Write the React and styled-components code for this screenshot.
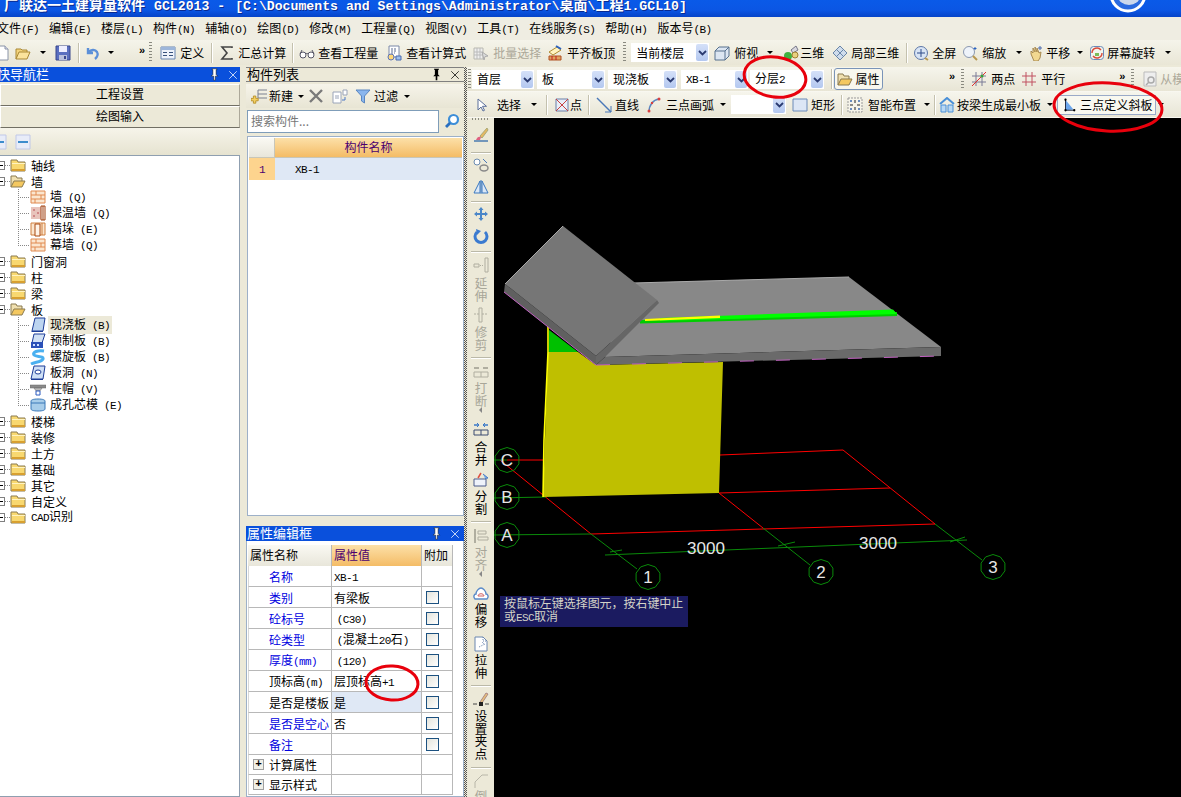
import React from 'react';
import styled, { createGlobalStyle } from 'styled-components';

const Global = createGlobalStyle`
  html, body { margin: 0; padding: 0; background: #ece9d8; overflow: hidden; }
  #root { width: 1181px; height: 797px; }
  * { box-sizing: border-box; }
`;
const CJK = `"Noto Sans CJK SC", "Liberation Sans", sans-serif`;
const Page = styled.div`
  position: relative; width: 1181px; height: 797px; overflow: hidden; display: flex; flex-direction: column;
  background: #ece9d8; color: #000; font: 12px/16px ${CJK};
`;
const Lat = styled.span`font-family: "Liberation Mono", monospace; font-size: ${p => p.$size || 11}px; letter-spacing: ${p => p.$size ? 0 : -0.6}px;`;
const T = ({ children, size }) => String(children).split(/([\u0000-\u007f]+)/).map((s, i) =>
  i % 2 ? <Lat key={i} $size={size}>{s}</Lat> : s);

/* ---------- icons ---------- */
const Svg = styled.svg`flex: none; display: block; width: ${p => p.$s || 16}px; height: ${p => p.$s || 16}px;`;
const icons = {
  doc: <><path d="M3 1h7l3 3v11H3z" fill="#fff" stroke="#8a94a8" /><path d="M10 1v3h3" fill="#dde" stroke="#8a94a8" /></>,
  open: <><path d="M1 14V4h5l1 1h5v2" fill="#f4d47c" stroke="#a88734" /><path d="M1 14l3-7h11l-3 7z" fill="#fbe39c" stroke="#a88734" /></>,
  save: <><path d="M1 1h14v14H1z" fill="#5a6fc0" stroke="#39478c" /><path d="M4 1h8v6H4z" fill="#eef" /><path d="M4 10h8v5H4z" fill="#b8bfdc" /><path d="M9 11h2v3H9z" fill="#39478c" /></>,
  undo: <path d="M4 3v5h5M4.500 7.500C7 4.500 11 4 13 7c1.200 2 .5 5-2 7" fill="none" stroke="#5b8fd8" strokeWidth="2.400" />,
  define: <><path d="M1 2h14v12H1z" fill="#eef2fa" stroke="#6a86b0" /><path d="M1 2h14v3H1z" fill="#9db6da" /><path d="M3 7h4v1H3zM9 7h4v1H9zM3 10h4v1H3zM9 10h4v1H9z" fill="#39527c" /></>,
  sigma: <path d="M13 3V2H3l5 6-5 6h10v-1" fill="none" stroke="#444" strokeWidth="1.600" />,
  glasses: <><circle cx="4" cy="10" r="3" fill="#fff" stroke="#556" /><circle cx="12" cy="10" r="3" fill="#fff" stroke="#556" /><path d="M7 9c1-1 1-1 2 0M1 9l2-4M15 9l-2-4" fill="none" stroke="#556" /></>,
  calc: <><path d="M3 1h10v11H3z" fill="#fff" stroke="#7a88a8" /><path d="M5 4h6M5 6h6M5 8h4" stroke="#5a6a90" strokeDasharray="2 1" /><circle cx="5" cy="12" r="3" fill="#ffd878" stroke="#5a72b8" /><path d="M10 11h5v4h-5z" fill="#9ec0ec" stroke="#4a6ab0" /></>,
  batch: <><path d="M1 3h9v11H1z" fill="#eee" stroke="#b8b8b0" /><path d="M1 7h9M1 10h9M4 3v11M7 3v11" stroke="#bbb" /><path d="M9 7l6 4-3 .5L11 15z" fill="#ddd" stroke="#aaa" /></>,
  flush: <><path d="M2 7l8-5 4 3-8 5z" fill="#fff3c0" stroke="#b08b30" /><path d="M2 11h12v4H2z" fill="#e0a060" stroke="#b05020" /><path d="M5 11v4M9 11v4" stroke="#c02020" /><path d="M9 1l5 3" stroke="#2a62c0" strokeWidth="2" /></>,
  cube: <><path d="M1 6l4-4h10v9l-4 4H1z" fill="#dce6f2" stroke="#56708e" /><path d="M1 6h10v9M11 6l4-4" fill="none" stroke="#56708e" /></>,
  threeD: <><circle cx="5" cy="11" r="4" fill="#3fb23f" /><path d="M8 5l5-4 2 4-5 3z" fill="#d8d8e0" stroke="#778" /><circle cx="12" cy="10" r="3" fill="#e8d080" stroke="#a08030" /></>,
  part3d: <><path d="M1 8l7-7 7 7-7 7z" fill="#cfdcec" stroke="#6a86a8" /><path d="M4.500 4.500l7 7M8 1l3.500 3.500M11.500 4.500l-7 7M8 8l3.500-3.500" stroke="#6a86a8" /></>,
  fullscr: <><circle cx="8" cy="8" r="6.500" fill="#d8e4f4" stroke="#5e78a8" /><path d="M8 4v8M4 8h8" stroke="#2c4a88" /><path d="M12 13l3 2" stroke="#b89850" strokeWidth="2" /></>,
  zoom: <><circle cx="7" cy="7" r="5.500" fill="#eef3fa" stroke="#8a98b0" /><path d="M11 11l4 4" stroke="#b89850" strokeWidth="2" /><path d="M13 2v3M11.500 3.500h3" stroke="#2a62c0" /></>,
  pan: <><path d="M3 9V6l2 2V3l2 4V2l2 5V3l2 5 2-1-1 6-2 3H6z" fill="#f2d890" stroke="#a88a50" /><path d="M12 1v4M10 3h4" stroke="#4a6ab0" /></>,
  rot: <><rect x="1.500" y="1.500" width="13" height="13" rx="3" fill="#f2f6ee" stroke="#6a8ab8" /><path d="M3 8a5 5 0 0 1 9-3M13 8a5 5 0 0 1-9 3" fill="none" stroke="#d84a3a" strokeWidth="1.400" /><path d="M6 8h4v3H6z" fill="#7cbc5a" /></>,
  two: <><path d="M5 1v14M11 1v14M1 5h14M1 11h14" stroke="#7a7a96" /><path d="M1 15L15 1" stroke="#e03030" /><circle cx="11" cy="5" r="1.500" fill="#38a038" /></>,
  par: <path d="M5 1v14M11 1v14M1 5h14M1 11h14" stroke="#c05060" />,
  model: <><path d="M2 1h12v14H2z" fill="#eee" stroke="#bbb" /><circle cx="9" cy="9" r="3" fill="none" stroke="#aaa" strokeWidth="1.500" /><path d="M7 11l-3 3" stroke="#aaa" strokeWidth="1.500" /></>,
  arrow: <path d="M5 2v11l3-3 2 4 1.500-.7-2-4h4z" fill="#fff" stroke="#5a6e9a" />,
  point: <><path d="M2 2h12v12H2z" fill="#e8eef8" stroke="#6a7ea8" /><path d="M2 2l12 12M14 2L2 14" stroke="#c84040" /></>,
  line: <><path d="M1 1l14 14" stroke="#4a78b8" strokeWidth="1.400" /><path d="M15 9v6H9" fill="none" stroke="#4a78b8" /></>,
  arc: <><path d="M3 15C3 8 7 3 13 2" fill="none" stroke="#5a86c0" strokeWidth="1.400" /><circle cx="3" cy="14" r="1.500" fill="#d84040" /><circle cx="13" cy="2" r="1.500" fill="#d84040" /><circle cx="6" cy="6" r="1.200" fill="#d84040" /></>,
  rect: <path d="M1 2h14v12H1z" fill="#dce6f5" stroke="#6a8ab8" />,
  smart: <><path d="M1 1h14v14H1z" fill="#f6f4ea" stroke="#999" strokeDasharray="2 1" /><path d="M8 3v3M8 10v3M3 8h3M10 8h3" stroke="#222" /><circle cx="4" cy="4" r="1" fill="#3a6ab0" /><circle cx="12" cy="4" r="1" fill="#3a6ab0" /><circle cx="4" cy="12" r="1" fill="#3a6ab0" /><circle cx="12" cy="12" r="1" fill="#3a6ab0" /></>,
  beam: <><path d="M1 7l7-6 7 6" fill="none" stroke="#4a90d8" strokeWidth="2" /><path d="M2 8h5v7H2zM9 8h5v7H9z" fill="#b8d8f4" stroke="#4a90d8" /></>,
  plane: <><path d="M4 2v12l9-1z" fill="#6aa6ec" /><path d="M4 1v13h10" fill="none" stroke="#101830" /><circle cx="4" cy="2" r="1.300" /><circle cx="4" cy="14" r="1.300" /><circle cx="14" cy="14" r="1.300" /></>,
  newItem: <><path d="M7 2h9M7 6h9M7 10h9M7 2v8" stroke="#7a8090" /><path d="M3 9h3v3h3v3H6v3H3v-3H0v-3h3z" transform="scale(.8) translate(0,1)" fill="#f4d060" stroke="#b08820" /></>,
  del: <path d="M2 2l12 12M14 2L2 14" stroke="#7a7a7a" strokeWidth="2.400" />,
  copy: <><path d="M1 4h8v11H1z" fill="#fff" stroke="#9aa4b8" /><path d="M3 8h4M3 10h4" stroke="#9aa4b8" /><path d="M11 2h4v5h-4z" fill="#fff" stroke="#9aa4b8" /><path d="M13 9v3h-3" fill="none" stroke="#4a78c8" /></>,
  funnel: <path d="M1 2h14L9.500 8v7L6.500 13V8z" fill="#8ab6ee" stroke="#5a86c0" />,
  search: <><circle cx="9.500" cy="6.500" r="4.500" fill="#fff" stroke="#3d8ed8" strokeWidth="2.200" /><path d="M6 10l-4 4" stroke="#2a70c0" strokeWidth="2.800" /></>,
  pin: <path d="M5 1h6v1h-1v6l2 2H9v5H7v-5H4l2-2V2H5z" fill="#fff" stroke="#000" strokeWidth=".6" />,
  pinD: <path d="M5 1h6v1h-1v6l2 2H9v5H7v-5H4l2-2V2H5z" fill="#000" />,
  close: <path d="M3 3l10 10M13 3L3 13" stroke="currentColor" />,
  folder: <><path d="M1 14V3h6l1 2h7v9z" fill="#f8d870" stroke="#8a7a50" /><path d="M2 6h13v1H2z" fill="#fff3c0" /><path d="M2 12h13v2H2z" fill="#d8a030" /></>,
  folderO: <><path d="M1 14V3h5l1 2h5v3" fill="#f0e0b0" stroke="#8a7a50" /><path d="M1 14l3-6h11l-3 6z" fill="#f4c860" stroke="#8a7a50" /></>,
  wall: <><path d="M1 2h14v12H1z" fill="#fbe6cf" stroke="#e08a50" /><path d="M1 6h14M1 10h14M6 2v4M11 6v4M5 10v4" stroke="#e08a50" /></>,
  insu: <><path d="M1 2h10v12H1z" fill="#e8c4bc" /><path d="M3 4h2v2H3zM7 7h2v2H7zM3 10h2v2H3z" fill="#d08888" /><path d="M11 1h4v14h-4z" fill="#fff" stroke="#a04010" /><path d="M13 1v14" stroke="#a04010" /></>,
  pier: <><path d="M1 2h14v12H1z" fill="#fbe6cf" stroke="#d08040" /><path d="M5 3h5v12H5z" fill="#fff4e8" stroke="#a84810" /><path d="M12 2v12" stroke="#d08040" /></>,
  slab: <><path d="M5 1h10l-2 13H2z" fill="#bcd4f0" stroke="#1c3c98" /><path d="M2 14h11v1H1z" fill="#1c3c98" /></>,
  precast: <><path d="M4 1h11l-3 9H2z" fill="#d0e0f4" stroke="#1c3c98" /><path d="M1 9h12v6H1z" fill="#2a50b8" /><path d="M3 11h2v2H3zM7 11h2v2H7z" fill="#cfe0ff" /></>,
  spiral: <path d="M14 2C8 1 2 3 4 6c2 2 10 1 9 4-1 3-8 3-12 5" fill="none" stroke="#4ab0f0" strokeWidth="3" />,
  hole: <><path d="M4 1h11l-2 13H1z" fill="#cfe0f6" stroke="#1c3c98" /><ellipse cx="8" cy="7" rx="3" ry="2" fill="#fff" stroke="#1c3c98" /><path d="M1 14h12v1H1z" fill="#1c3c98" /></>,
  cap: <><path d="M0 4h16v3H0z" fill="#8a8a8a" stroke="#666" strokeWidth=".5" /><path d="M4 7h8l-2 3H6z" fill="#bbb" stroke="#666" strokeWidth=".5" /><path d="M6 10h4v4H6z" fill="#fff" stroke="#2a5ac0" /></>,
  core: <><path d="M1 4c0-1 2-2 7-2s7 1 7 2v8c0 1-2 2-7 2s-7-1-7-2z" fill="#a8cdea" stroke="#3a78b8" /><path d="M1 6h14" stroke="#3a78b8" /></>,
  collapse: <><path d="M1 1h14v14H1z" fill="#e8ecf8" stroke="#c0c8e8" /><path d="M3 7h10v2H3z" fill="#3c8ccc" /></>,
  brush: <><path d="M14 1L7 9l2 2 6-8z" fill="#e8b860" stroke="#aa7" /><path d="M3 13c1-3 3-4 5-3l-1 3z" fill="#e06080" /><path d="M1 14h14" stroke="#4a7ab0" strokeWidth="1.500" /></>,
  offs: <><circle cx="4" cy="5" r="3" fill="#fff" stroke="#6a8ab0" /><ellipse cx="11" cy="11" rx="4" ry="3" fill="none" stroke="#8a8a8a" strokeWidth="1.500" /><path d="M10 2l4 4" stroke="#4a78b8" /></>,
  mirror: <path d="M7 2L1 14h6zM9 2l6 12H9zM8 1v14" fill="#dce8f6" stroke="#3a78c0" />,
  move: <path d="M8 1l2.500 3H9v3h3V5.500L15 8l-3 2.500V9H9v3h1.500L8 15l-2.500-3H7V9H4v1.500L1 8l3-2.500V7h3V4H5.500z" fill="#4a86c8" />,
  rotate: <><path d="M4 4a6 6 0 1 0 8 0" fill="none" stroke="#3a7ad0" strokeWidth="3" /><path d="M3 1l5 2-4 4z" fill="#3a7ad0" /></>,
  extend: <><path d="M12 1h3v14h-3z" fill="none" stroke="#b0aea0" /><path d="M1 7h5v3H1z" fill="none" stroke="#b0aea0" /><path d="M7 8.500h4" stroke="#b0aea0" strokeDasharray="1 1" /></>,
  trim: <><path d="M6 1h3v14H6z" fill="none" stroke="#b0aea0" /><path d="M1 7h5M9 7h6" stroke="#b0aea0" strokeDasharray="2 1" /></>,
  brk: <><path d="M1 9h14v5H1zM8 9v5" fill="none" stroke="#b0aea0" /><path d="M1 5h5M15 5h-5" stroke="#b0aea0" strokeWidth="2" /></>,
  merge: <><path d="M1 9h14v5H1zM8 9v5" fill="none" stroke="#3a4a70" /><path d="M1 4h5l-2-2M1 4h5l-2 2M15 4h-5l2-2M15 4h-5l2 2" fill="none" stroke="#3a78c8" /></>,
  split: <><path d="M1 7h12v7H1z" fill="#eef2fa" stroke="#4a5a8a" /><path d="M8 1l-3 5" stroke="#e05040" strokeWidth="1.500" /><path d="M10 2l5 4-3 .5" fill="#7cb0ec" stroke="#4a78c0" /></>,
  align: <><path d="M2 1v14" stroke="#b0aea0" strokeWidth="2" /><path d="M5 3h8v3H5zM5 9h10v3H5z" fill="none" stroke="#b0aea0" /></>,
  cloud: <><path d="M2 13c-2-2-1-5 1-5 0-3 3-6 5-6s5 3 5 6c2 0 3 3 1 5z" fill="#fff" stroke="#5a8ac8" strokeWidth="1.400" /><path d="M5 10c0-3 6-3 6 0z" fill="#fff" stroke="#d06060" /></>,
  stretch: <><path d="M2 1h8l4 4v10H2z" fill="#fff" stroke="#6a86b0" /><path d="M10 1v4h4M6 11l6-3M9 6l3 3" fill="none" stroke="#6a86b0" strokeDasharray="1 1" /></>,
  grip: <><path d="M7 11l6-9 2 1-6 9z" fill="#e8c078" stroke="#a88" /><path d="M0 13h4M12 13h4" stroke="#444" /><rect x="6" y="11" width="4" height="4" fill="#222" /></>,
  chamfer: <path d="M2 15V9l7-7h6" fill="none" stroke="#b8b6a8" />,
};
const Icon = ({ name, size }) => <Svg $s={size} viewBox="0 0 16 16">{icons[name]}</Svg>;

/* ---------- window chrome ---------- */
const TitleBar = styled.div`
  flex: none; height: 17px; display: flex; align-items: center; justify-content: space-between; overflow: hidden;
  background: linear-gradient(#0a5ae8, #0b56e4 60%, #0644c8);
  color: #fff; font: 700 14px/17px ${CJK}; text-shadow: 1px 1px 0 #0a2a90; white-space: pre;
`;
const TitleText = styled.div`margin-left: 4px; margin-top: -6px;`;
const TitleGap = styled.span`margin-left: ${p => p.$w}px;`;
const AppLogo = styled.svg`flex: none; width: 40px; height: 17px; margin-right: 33px;`;
const MenuBar = styled.div`
  flex: none; height: 23px; display: flex; align-items: center; margin-left: -8px; background: #efede2; width: 1200px;
`;
const MenuItem = styled.div`padding: 0 5px; white-space: nowrap; flex: none;`;
const MainBar = styled.div`
  flex: none; height: 25px; display: flex; align-items: center; margin-left: -5px; width: 1200px; white-space: nowrap;
  background: linear-gradient(#f5f4ea, #e9e6d6);
`;
const ToolBtn = styled.div`
  display: flex; align-items: center; flex: none; gap: ${p => p.$gap ?? 4}px; padding: 0 ${p => p.$pad ?? 4}px;
  color: ${p => p.$off ? '#aca899' : '#000'}; font-size: 12px;
`;
const Caret = styled.i`
  flex: none; width: 0; height: 0; margin-left: ${p => p.$ml ?? 6}px; margin-right: ${p => p.$mr ?? 0}px;
  border: 3px solid transparent; border-top: 3px solid #000; border-bottom: 0;
`;
const Tool = ({ icon, label, drop, off, pad, gap, ml, mr }) => (
  <ToolBtn $off={off} $pad={pad} $gap={gap}>
    {icon && <Icon name={icon} />}{label && <span>{label}</span>}
    {drop && <Caret $ml={ml} $mr={mr} />}
  </ToolBtn>
);
const Sep = styled.div`flex: none; width: 1px; height: 20px; margin: 0 ${p => p.$m ?? 4}px; background: #c4c1ae; box-shadow: 1px 0 0 #fff;`;
const Grip = styled.div`
  flex: none; width: 3px; height: 21px; margin: 0 ${p => p.$m ?? 3}px;
  background: repeating-linear-gradient(#8a8a80 0 1px, transparent 1px 3px);
`;
const More = styled.div`flex: none; font: 700 11px/10px "Liberation Sans", sans-serif; margin-left: ${p => p.$ml || 0}px; margin-right: ${p => p.$mr || 0}px; margin-top: -6px;`;

const ComboBox = styled.div`
  flex: none; width: ${p => p.$w}px; height: 19px; margin-right: ${p => p.$mr ?? 3}px; display: flex; align-items: center;
  justify-content: space-between; background: #fff; padding: 0 1px 0 5px;
`;
const ComboBtn = styled.div`
  flex: none; width: 12px; height: 17px; display: flex; align-items: center; justify-content: center;
  background: linear-gradient(#d4e0f8, #b4c8f0); border-radius: 2px;
`;
const Combo = ({ w, text, mr }) => (
  <ComboBox $w={w} $mr={mr}><span>{text && <T>{text}</T>}</span>
    <ComboBtn><Svg $s={9} viewBox="0 0 9 9"><path d="M1 3l3.500 3.500L8 3" fill="none" stroke="#2a3a70" strokeWidth="1.800" /></Svg></ComboBtn>
  </ComboBox>
);

/* ---------- body ---------- */
const Body = styled.div`flex: 1; min-height: 0; display: flex; padding-top: 2px;`;
const NavCol = styled.div`flex: none; width: 240px; display: flex; flex-direction: column;`;
const PanelHead = styled.div`
  flex: none; height: ${p => p.$h || 15}px; display: flex; align-items: center; justify-content: space-between;
  padding-right: ${p => p.$pr ?? 3}px; font-size: 13px; line-height: 13px; white-space: nowrap;
  ${p => p.$active ? 'background:#0a50dc;color:#fff;' : 'background:#ece9d8;color:#000;border-top:1px solid #808080;border-bottom:1px solid #808080;'}
`;
const HeadBtns = styled.div`display: flex; gap: 6px; align-items: center; color: inherit;`;
const HeadTitle = styled.span`margin-left: ${p => p.$ml || 0}px; margin-top: -2px;`;
const NavBtn = styled.div`
  flex: none; height: 22px; margin-top: ${p => p.$mt || 0}px; text-align: center; line-height: 18px; background: #ece9d8;
  border: 1px solid #fff; border-right-color: #aca899; border-bottom-color: #716f64; font-size: 12px;
`;
const NavTools = styled.div`
  flex: none; height: 27px; display: flex; align-items: center; gap: 8px; margin-left: -9px;
  background: linear-gradient(#f6f4ea, #e6e3d0);
`;
const Tree = styled.div`flex: 1; background: #fff; border: 1px solid #8f9fb0; border-left: 0; padding-top: 1px; overflow: hidden;`;
const TreeRow = styled.div`height: 16px; display: flex; align-items: center; white-space: nowrap; margin-left: ${p => p.$child ? 18 : -4}px;`;
const Expander = styled.div`
  flex: none; width: 9px; height: 9px; border: 1px solid #808080; background: #fff; display: flex; align-items: center; justify-content: center;
  &::after { content: ""; width: 5px; height: 1px; background: #000; }
`;
const HDots = styled.div`flex: none; width: 5px; height: 1px; background: repeating-linear-gradient(90deg, #888 0 1px, transparent 1px 2px);`;
const Branch = styled.div`
  flex: none; width: 12px; height: 16px;
  background:
    repeating-linear-gradient(90deg, #888 0 1px, transparent 1px 2px) 0 8px / 12px 1px no-repeat,
    repeating-linear-gradient(#888 0 1px, transparent 1px 2px) 0 0 / 1px ${p => p.$last ? '9px' : '16px'} no-repeat;
`;
const TreeLabel = styled.span`
  margin-left: ${p => p.$child ? 2 : 3}px; padding: 0 2px; line-height: 15px;
  ${p => p.$sel && 'background:#ece9d8;'}
`;

const MidCol = styled.div`flex: none; width: 218px; margin-left: 6px; display: flex; flex-direction: column;`;
const ListTools = styled.div`
  flex: none; height: 24px; margin-top: 2px; display: flex; align-items: center; padding-left: 5px;
  background: linear-gradient(#f6f4ea, #e8e5d4);
`;
const SearchRow = styled.div`flex: none; height: 26px; display: flex; align-items: center; padding-left: 1px;`;
const SearchInput = styled.div`
  flex: none; width: 192px; height: 23px; padding-left: 3px; line-height: 19px; background: #fff; color: #777;
  border: 1px solid #7f9db9; font-size: 12px;
`;
const SearchBtn = styled.div`margin-left: 5px;`;
const ListFrame = styled.div`flex: none; height: 380px; background: #fff; border: 1px solid #9db0c8; margin-left: 1px; margin-top: 2px; padding: 1px 1px 0;`;
const ListHead = styled.div`display: grid; grid-template-columns: 26px 1fr; height: 20px;`;
const CornerCell = styled.div`background: linear-gradient(#faf9f3, #e8e6da); border-right: 1px solid #c8c6b8; border-bottom: 1px solid #c8c6b8;`;
const OrangeCell = styled.div`
  text-align: center; color: #4b0070; line-height: 18px; background: linear-gradient(#fce0a8, #f4bc66); border-bottom: 1px solid #c8c6b8;
`;
const ListRow = styled.div`display: grid; grid-template-columns: 26px 1fr; height: 20px; border-bottom: 1px solid #b8b8b8;`;
const IdxCell = styled.div`background: #fdd48e; color: #4b0070; padding-left: 10px; line-height: 19px;`;
const NameCell = styled.div`background: #dfe8f5; padding-left: 20px; line-height: 19px;`;

const PropPanel = styled.div`margin-top: 10px; flex: 1; display: flex; flex-direction: column; min-height: 0;`;
const PropFrame = styled.div`flex: 1; background: #fff; border: 1px solid #9db0c8; border-top: 0; padding: 4px 0 0 1px;`;
const PropGrid = styled.div`display: grid; grid-template-columns: 84px 90px 31px; width: 206px; font-size: 12px;`;
const PropHead = styled.div`
  height: 21px; line-height: 20px; padding-left: ${p => p.$pad ?? 2}px; color: ${p => p.$val ? '#4b0070' : '#000'};
  background: ${p => p.$val ? 'linear-gradient(#fce0a8,#f4bc66)' : 'linear-gradient(#faf9f3,#e8e6da)'};
  border-right: 1px solid #b8b8b8;
`;
const PropCell = styled.div`
  height: ${p => p.$h || 21}px; line-height: 20px; padding-left: ${p => p.$pad ?? 2}px; white-space: nowrap; overflow: hidden;
  border-right: 1px solid #b8b8b8; border-bottom: 1px solid #b8b8b8; border-left: ${p => p.$first ? '1px solid #d8d8d8' : 0};
  color: ${p => p.$blue ? '#0000e0' : '#000'}; background: ${p => p.$bg || '#fff'};
  display: flex; align-items: center; gap: 5px;
`;
const PropText = styled.span`margin-top: 2px;`;
const Check = styled.div`
  width: 13px; height: 13px; margin-left: 2px; border: 1px solid #1c5180; background: linear-gradient(135deg, #e4e4dc, #fff);
`;
const PlusBox = styled.div`
  flex: none; width: 11px; height: 11px; margin-left: 2px; border: 1px solid #a0a0a0; background: #f0f0e8; color: #000;
  font: 700 11px/9px "Liberation Mono", monospace; text-align: center;
`;

const Splitter = styled.div`
  flex: none; width: 3px; background: repeating-conic-gradient(#555 0 25%, #ece9d8 0 50%) 0 0 / 2px 2px;
`;
const RightCol = styled.div`flex: 1; min-width: 0; display: flex; flex-direction: column; margin-top: 0;`;
const RowBar = styled.div`
  flex: none; height: ${p => p.$h}px; display: flex; align-items: center; white-space: nowrap; overflow: hidden;
  background: linear-gradient(#f6f5ec, #e8e5d5); border-bottom: 1px solid #f8f7f0;
`;
const AttrBtn = styled.div`
  flex: none; height: 22px; width: 49px; margin-left: -2px; display: flex; align-items: center; justify-content: center; gap: 2px; background: #f8f7ee;
  border: 1px solid #7a94b8; border-radius: 3px;
`;
const ActiveBtn = styled.div`
  flex: none; height: 20px; width: 99px; margin-left: 2px; display: flex; align-items: center; gap: 4px; padding-left: 4px;
  background: #f8f8f0; border: 1px solid #9aaac8; letter-spacing: .1px;
`;
const Work = styled.div`flex: 1; min-height: 0; display: flex;`;
const VBar = styled.div`
  flex: none; width: 27px; display: flex; flex-direction: column; align-items: center; overflow: hidden;
  background: #ece9d8;
`;
const VTool = styled.div`
  flex: none; display: flex; flex-direction: column; align-items: center; color: ${p => p.$off ? '#a8a698' : '#000'};
  margin-top: ${p => p.$mt ?? 3}px;
`;
const VLabel = styled.span`
  writing-mode: vertical-rl; text-orientation: upright; font-size: 12.5px; line-height: 14px; margin-top: ${p => p.$mt ?? 2}px;
`;
const VSep = styled.div`flex: none; width: 20px; height: 1px; margin-top: ${p => p.$mt ?? 6}px; background: #bbb9a8; box-shadow: 0 1px 0 #fff;`;
const VCaret = styled.i`flex: none; width: 0; height: 0; border: 3px solid transparent; border-right: 3px solid #888; border-left: 0;`;
const VGrip = styled.div`flex: none; width: 18px; height: 2px; background: repeating-linear-gradient(90deg, #8a8a80 0 1px, transparent 1px 3px);`;
const Canvas = styled.div`position: relative; flex: 1; min-width: 0; background: #000; overflow: hidden;`;
const Scene = styled.svg`display: block; width: 687px; height: 679px;`;
const Hint = styled.div`
  position: absolute; left: 6px; top: 478px; width: 188px; height: 31px; padding: 0 4px; background: #1b1b60; color: #d4d4c8;
  font-size: 12px; line-height: 13px; letter-spacing: -.05px;
`;
const Marks = styled.svg`position: absolute; left: 0; top: 0; width: 1181px; height: 797px; pointer-events: none;`;

/* ---------- data ---------- */
const menus = ['文件(F)','编辑(E)','楼层(L)','构件(N)','辅轴(O)','绘图(D)','修改(M)','工程量(Q)','视图(V)','工具(T)','在线服务(S)','帮助(H)','版本号(B)'];
const tree = [
  ['轴线'], ['墙', 1],
  ['墙(Q)', 2, 'wall'], ['保温墙(Q)', 2, 'insu'], ['墙垛(E)', 2, 'pier'], ['幕墙(Q)', 2, 'wall', 'last'],
  ['门窗洞'], ['柱'], ['梁'], ['板', 1],
  ['现浇板(B)', 2, 'slab', 'sel'], ['预制板(B)', 2, 'precast'], ['螺旋板(B)', 2, 'spiral'], ['板洞(N)', 2, 'hole'], ['柱帽(V)', 2, 'cap'], ['成孔芯模(E)', 2, 'core', 'last'],
  ['楼梯'], ['装修'], ['土方'], ['基础'], ['其它'], ['自定义'], ['CAD识别'],
];
const props = [
  ['名称', 1, 'XB-1', 0], ['类别', 1, '有梁板', 1], ['砼标号', 1, ' (C30)', 1], ['砼类型', 1, ' (混凝土20石)', 1],
  ['厚度(mm)', 1, ' (120)', 1], ['顶标高(m)', 0, '层顶标高+1', 1], ['是否是楼板', 0, '是', 1, '#dfe8f5'], ['是否是空心', 1, '否', 1], ['备注', 1, '', 1],
];
const poly = (cx, cy, r = 12.5, n = 10) => Array.from({ length: n }, (_, i) => {
  const a = (i / n) * Math.PI * 2 + Math.PI / 10;
  return `${(cx + r * Math.cos(a)).toFixed(1)},${(cy + r * Math.sin(a)).toFixed(1)}`;
}).join(' ');
const axes = [['C', 507, 460], ['B', 507, 497], ['A', 507, 535], ['1', 648, 577], ['2', 821, 572], ['3', 993, 567]];
const reds = ['500,460 591,534', '544,460 507,460', '720,455 843,450 935,524', '719,493 890,488', '591,534 935,524', '719,493 763,528'];
const greens = ['493,535 591,534', '493,498 546,497', '493,460 507,460', '591,534 637,569', '763,528 810,565', '935,524 982,560', '605,555 967,540', '610,552 622,550', '778,546 795,542', '950,542 965,537'];

export default function App() {
  return (
    <Page>
      <Global />
      <TitleBar>
        <TitleText>厂<TitleGap $w={1} />联达一土建算量软件<TitleGap $w={9} /><Lat $size={13.2}>GCL2013 - </Lat><TitleGap $w={2} /><Lat $size={13.2}>[C:\Documents and Settings\Administrator\</Lat>桌面<Lat $size={13.2}>\</Lat>工程<Lat $size={13.2}>1.GCL10]</Lat></TitleText>
        <AppLogo viewBox="0 0 40 17"><circle cx="20" cy="-6" r="17" fill="#2a6ae0" stroke="#fff" strokeWidth="3" /><ellipse cx="21" cy="-4" rx="11" ry="9" fill="#ccd8ec" /></AppLogo>
      </TitleBar>
      <MenuBar>{menus.map(m => <MenuItem key={m}><T>{m}</T></MenuItem>)}</MenuBar>
      <MainBar>
        <Tool icon="doc" pad={0} /><Tool icon="open" pad={4} drop ml={5} /><Tool icon="save" pad={5} /><Sep $m={2} />
        <Tool icon="undo" pad={3} drop ml={4} /><More $ml={22}>»</More><Grip $m={4} />
        <Tool icon="define" label="定义" /><Sep $m={3} /><Tool icon="sigma" label="汇总计算" gap={3} /><Sep $m={2} />
        <Tool icon="glasses" label="查看工程量" gap={3} /><Tool icon="calc" label="查看计算式" /><Tool icon="batch" label="批量选择" off pad={3} /><Tool icon="flush" label="平齐板顶" pad={3} /><Grip $m={5} />
        <Combo w={78} text="当前楼层" mr={1} /><Tool icon="cube" label="俯视" gap={4} drop ml={5} mr={2} /><Tool icon="threeD" label="三维" gap={1} pad={4} /><Tool icon="part3d" label="局部三维" gap={3} /><Sep $m={3} />
        <Tool icon="fullscr" label="全屏" gap={3} pad={3} /><Tool icon="zoom" label="缩放" drop ml={6} pad={3} /><Tool icon="pan" label="平移" gap={2} drop ml={5} pad={3} /><Tool icon="rot" label="屏幕旋转" gap={2} drop ml={8} pad={3} />
      </MainBar>
      <Body>
        <NavCol>
          <PanelHead $active $pr={1}><HeadTitle $ml={-3}>快导航栏</HeadTitle><HeadBtns><Icon name="pin" size={13} /><Icon name="close" size={12} /></HeadBtns></PanelHead>
          <NavBtn $mt={2}>工程设置</NavBtn><NavBtn>绘图输入</NavBtn>
          <NavTools><Icon name="collapse" /><Icon name="collapse" /></NavTools>
          <Tree>
            {tree.map(([t, k, ic, flag]) => k === 2 ? (
              <TreeRow key={t} $child><Branch $last={flag === 'last'} /><Icon name={ic} /><TreeLabel $child $sel={flag === 'sel'}><T>{t.replace('(', ' (')}</T></TreeLabel></TreeRow>
            ) : (
              <TreeRow key={t}><Expander /><HDots /><Icon name={k ? 'folderO' : 'folder'} /><TreeLabel><T>{t}</T></TreeLabel></TreeRow>
            ))}
          </Tree>
        </NavCol>
        <MidCol>
          <PanelHead><HeadTitle $ml={1}>构件列表</HeadTitle><HeadBtns><Icon name="pinD" size={13} /><Icon name="close" size={12} /></HeadBtns></PanelHead>
          <ListTools>
            <Tool icon="newItem" label="新建" drop ml={3} gap={2} pad={0} /><Tool icon="del" pad={4} /><Tool icon="copy" pad={4} /><Tool icon="funnel" label="过滤" drop ml={3} gap={3} pad={3} />
          </ListTools>
          <SearchRow><SearchInput>搜索构件...</SearchInput><SearchBtn><Icon name="search" /></SearchBtn></SearchRow>
          <ListFrame>
            <ListHead><CornerCell /><OrangeCell>构件名称</OrangeCell></ListHead>
            <ListRow><IdxCell><T>1</T></IdxCell><NameCell><T>XB-1</T></NameCell></ListRow>
          </ListFrame>
          <PropPanel>
            <PanelHead $active><HeadTitle $ml={1}>属性编辑框</HeadTitle><HeadBtns><Icon name="pin" size={13} /><Icon name="close" size={12} /></HeadBtns></PanelHead>
            <PropFrame>
              <PropGrid>
                <PropHead>属性名称</PropHead><PropHead $val>属性值</PropHead><PropHead>附加</PropHead>
                {props.map(([n, blue, v, c, bg]) => (
                  <React.Fragment key={n}>
                    <PropCell $first $pad={20} $blue={blue}><PropText><T>{n}</T></PropText></PropCell>
                    <PropCell $bg={bg}><PropText><T>{v.replace(' ', '\u00a0')}</T></PropText></PropCell>
                    <PropCell>{c ? <Check /> : null}</PropCell>
                  </React.Fragment>
                ))}
                {['计算属性', '显示样式'].map(n => (
                  <React.Fragment key={n}>
                    <PropCell $first $h={20}><PlusBox>+</PlusBox>{n}</PropCell><PropCell $h={20} /><PropCell $h={20} />
                  </React.Fragment>
                ))}
              </PropGrid>
            </PropFrame>
          </PropPanel>
        </MidCol>
        <Splitter />
        <RightCol>
          <RowBar $h={25}>
            <Grip $m={1} /><Combo w={62} text="首层" /><Combo w={68} text="板" /><Combo w={69} text="现浇板" mr={4} /><Combo w={67} text="XB-1" mr={2} /><Combo w={74} text="分层2" />
            <Sep $m={4} /><AttrBtn><Icon name="folderO" />属性</AttrBtn><More $ml={66} $mr={5}>»</More><Grip $m={1} />
            <Tool icon="two" label="两点" pad={6} /><Tool icon="par" label="平行" pad={0} /><More $ml={54} $mr={5}>»</More><Grip $m={1} /><Tool icon="model" label="从模" off pad={7} gap={2} />
          </RowBar>
          <RowBar $h={26}>
            <Tool icon="arrow" label="选择" gap={8} pad={6} drop ml={2} /><Sep $m={3} /><Tool icon="point" label="点" gap={0} pad={4} /><Sep $m={2} />
            <Tool icon="line" label="直线" gap={3} pad={5} /><Tool icon="arc" label="三点画弧" gap={4} pad={2} drop ml={2} mr={3} /><Combo w={55} mr={3} />
            <Tool icon="rect" label="矩形" gap={3} pad={3} /><Sep $m={3} /><Tool icon="smart" label="智能布置" gap={5} pad={2} drop ml={3} /><Sep $m={2} />
            <Tool icon="beam" label="按梁生成最小板" gap={2} pad={2} drop ml={4} />
            <ActiveBtn><Icon name="plane" size={14} /><span>三点定义斜板</span></ActiveBtn><Caret $ml={2} />
          </RowBar>
          <Work>
            <VBar>
              <VGrip />
              <VTool $mt={7}><Icon name="brush" /></VTool><VSep $mt={9} />
              <VTool $mt={4}><Icon name="offs" /></VTool><VTool $mt={6}><Icon name="mirror" /></VTool><VSep />
              <VTool $mt={4}><Icon name="move" /></VTool><VTool $mt={6}><Icon name="rotate" /></VTool><VSep $mt={7} />
              <VTool $mt={5} $off><Icon name="extend" /><VLabel $mt={4}>延伸</VLabel></VTool>
              <VTool $off $mt={5}><Icon name="trim" /><VLabel $mt={3}>修剪</VLabel></VTool><VSep />
              <VTool $off $mt={5}><Icon name="brk" /><VLabel $mt={3}>打断</VLabel><VCaret /></VTool>
              <VTool $mt={8}><Icon name="merge" /><VLabel $mt={4}>合并</VLabel></VTool>
              <VTool $mt={6}><Icon name="split" /><VLabel>分割</VLabel></VTool><VSep />
              <VTool $off $mt={6}><Icon name="align" /><VLabel>对齐</VLabel><VCaret /></VTool>
              <VTool $mt={9}><Icon name="cloud" /><VLabel $mt={1}>偏移</VLabel></VTool>
              <VTool $mt={8}><Icon name="stretch" /><VLabel>拉伸</VLabel></VTool><VSep />
              <VTool $mt={5}><Icon name="grip" /><VLabel $mt={3}>设置夹点</VLabel></VTool><VSep $mt={7} />
              <VTool $off $mt={5}><Icon name="chamfer" /><VLabel $mt={1}>倒角</VLabel></VTool>
            </VBar>
            <Canvas>
              <Scene viewBox="494 118 687 679">
                {reds.map(p => <polyline key={p} points={p} fill="none" stroke="#f00" />)}
                {greens.map(p => <polyline key={p} points={p} fill="none" stroke="#0a8a0a" />)}
                {axes.map(([l, x, y]) => (
                  <g key={l}>
                    <polygon points={poly(x, y)} fill="none" stroke="#0a8a0a" />
                    <text x={x} y={y + 6} textAnchor="middle" fill="#e6e6e6" fontFamily="Liberation Sans" fontSize="17">{l}</text>
                  </g>
                ))}
                <text x="706" y="554" textAnchor="middle" fill="#e6e6e6" fontFamily="Liberation Sans" fontSize="17">3000</text>
                <text x="878" y="549" textAnchor="middle" fill="#e6e6e6" fontFamily="Liberation Sans" fontSize="17">3000</text>
                {/* wall */}
                <polygon points="548,352 578,352 596,365 723,362 719,493 543,497" fill="#bfbf00" />
                <polyline points="548,320 548,352 544,440 543,497" fill="none" stroke="#ff0" strokeWidth="1.600" />
                <polygon points="549,330 549,352 578,352" fill="#00c000" />
                {/* right slab */}
                <polygon points="633,283 849,277 941,347 605,357" fill="#888" />
                <polyline points="633,283 849,277" fill="none" stroke="#aaa" />
                <polygon points="640,320 720,319 897,312 897,316 640,323.500" fill="#0c0" />
                <polygon points="660,318 893,309.500 897,314 660,321" fill="#0f0" />
                <polygon points="645,319 720,315.500 720,318 645,321" fill="#ff0" />
                <polygon points="596,365 941,356 941,347 605,357" fill="#6a6a6a" />
                <polyline points="596,365 941,356" fill="none" stroke="#c060c0" strokeDasharray="14 22" />
                {/* tilted slab */}
                <polygon points="505,284 504,292 596,365 596,356" fill="#606060" />
                <polyline points="504,292 596,365" fill="none" stroke="#c060c0" />
                <polygon points="657,300 659,303 605,357 596,365 596,356" fill="#666" />
                <polygon points="563,226 657,300 596,356 505,284" fill="#767676" />
                <polyline points="505,284 563,226" fill="none" stroke="#a8a8a8" />
              </Scene>
              <Hint>按鼠标左键选择图元，按右键中止或<Lat>ESC</Lat>取消</Hint>
            </Canvas>
          </Work>
        </RightCol>
      </Body>
      <Marks viewBox="0 0 1181 797">
        <g fill="none" stroke="#e8000c" strokeWidth="3">
          <ellipse cx="775" cy="77" rx="31" ry="20" transform="rotate(8 775 77)" />
          <ellipse cx="1108" cy="107" rx="54" ry="24" transform="rotate(3 1108 107)" />
          <ellipse cx="392" cy="683" rx="26" ry="17" transform="rotate(3 392 683)" />
        </g>
      </Marks>
    </Page>
  );
}
